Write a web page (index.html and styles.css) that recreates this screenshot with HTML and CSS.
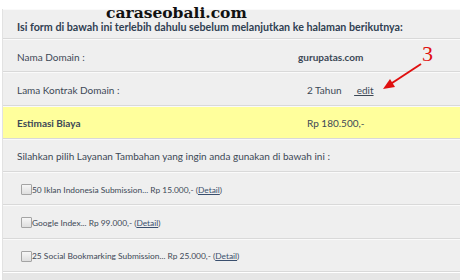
FILE: index.html
```html
<!DOCTYPE html>
<html lang="en">
<head>
  <meta charset="UTF-8">
  <title>Form Domain</title>
  <link rel="stylesheet" href="styles.css">
</head>
<body>
  <div class="page">
    <div class="brand">caraseobali.com</div>

    <div class="panel">
      <div class="row head">Isi form di bawah ini terlebih dahulu sebelum melanjutkan ke halaman berikutnya:</div>

      <div class="row">
        <span class="label">Nama Domain :</span>
        <span class="value domain">gurupatas.com</span>
      </div>

      <div class="row">
        <span class="label">Lama Kontrak Domain :</span>
        <span class="value">2 Tahun <a href="#" class="edit-link">&nbsp;edit</a></span>
      </div>

      <div class="row total">
        <span class="label">Estimasi Biaya</span>
        <span class="value">Rp 180.500,-</span>
      </div>

      <div class="row">
        <span class="intro">Silahkan pilih Layanan Tambahan yang ingin anda gunakan di bawah ini :</span>
      </div>

      <label class="row option">
        <input type="checkbox"> 50 Iklan Indonesia Submission... Rp 15.000,- (<a href="#">Detail</a>)
      </label>

      <label class="row option">
        <input type="checkbox"> Google Index... Rp 99.000,- (<a href="#">Detail</a>)
      </label>

      <label class="row option">
        <input type="checkbox"> 25 Social Bookmarking Submission... Rp 25.000,- (<a href="#">Detail</a>)
      </label>

      <div class="panel-foot"></div>
    </div>

    <div class="note-number">3</div>
    <svg class="note-arrow" width="50" height="32" viewBox="0 0 50 32">
      <line x1="40" y1="4" x2="8" y2="25" stroke="#e01010" stroke-width="2"/>
      <polygon points="2,29 9,19 14,27" fill="#e01010"/>
    </svg>
  </div>
</body>
</html>
```

FILE: styles.css
```css
:root {
  --panel-color: #efefef;
  --text-color: #3c4856;
  --line-color: #d9d9d9;
  --highlight-color: #ffff9c;
  --note-color: #e01010;
}

* {
  margin: 0;
  padding: 0;
  box-sizing: border-box;
}

body {
  background-color: #fff;
  color: var(--text-color);
  font-family: Lato, 'Segoe UI', sans-serif;
  font-size: 10px;
}

.page {
  position: relative;
  width: 460px;
  height: 280px;
  padding-top: 9px;
  padding-left: 2px;
  overflow: hidden;
}

.panel {
  background-color: var(--panel-color);
  border-left: 1px solid #e2e2e2;
}

.row {
  display: flex;
  align-items: center;
  height: 33.25px;
  padding: 3px 0 0 14px;
  border-bottom: 1px solid var(--line-color);
  box-shadow: inset 0 1px 0 #fafafa;
  white-space: nowrap;
}

.row.head {
  height: 30px;
  padding-top: 5px;
  font-size: 10.7px;
  font-weight: 700;
  color: #2f4052;
}

.label {
  flex: none;
  width: 290px;
}

.domain {
  margin-left: -9px;
  font-weight: 700;
}

.edit-link {
  margin-left: 10px;
  color: var(--text-color);
}

.row.total {
  background-color: var(--highlight-color);
  font-weight: 700;
}

.row.total .value {
  font-weight: 400;
}

.row.option {
  font-size: 8.4px;
  padding-left: 18px;
}

.option input {
  appearance: none;
  width: 11px;
  height: 11px;
  border: 1px solid #a4a4a4;
  border-radius: 1px;
  background: linear-gradient(#f6f6f6, #dedede);
}

.option a {
  color: #3a4f6e;
}

.panel-foot {
  height: 10px;
  border-top: 1px solid #fff;
  background-color: #e6e6e6;
}

.brand {
  position: absolute;
  top: 3px;
  left: 106px;
  font-family: 'DejaVu Serif', serif;
  font-weight: 700;
  font-size: 15.5px;
  color: #111;
}

.note-number {
  position: absolute;
  top: 41px;
  left: 422px;
  font-family: 'Liberation Serif', serif;
  font-size: 22px;
  color: var(--note-color);
}

.note-arrow {
  position: absolute;
  top: 60px;
  left: 381px;
}
```
